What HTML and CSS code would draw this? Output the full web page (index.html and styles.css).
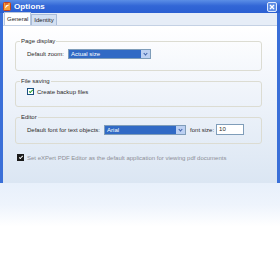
FILE: index.html
```html
<!DOCTYPE html>
<html lang="en">
<head>
    <meta charset="UTF-8">
    <title>Options</title>
    <link rel="stylesheet" href="styles.css">
</head>
<body>
    <div class="window">
        <div class="titlebar">
            <svg class="app-icon" width="8" height="9" viewBox="0 0 8 9">
                <rect x="0.5" y="0.5" width="7" height="8" rx="1" fill="#f6a03a" stroke="#c4431b"/>
                <path d="M2 6.5 C3 2 5 2 6 3.5 C4.5 3.5 3.5 5 2 6.5 Z" fill="#fff"/>
                <path d="M2 2 H5" stroke="#d2341c" stroke-width="1"/>
            </svg>
            <span class="title">Options</span>
            <span class="close">
                <svg width="8" height="8" viewBox="0 0 8 8"><path d="M2 2 L6 6 M6 2 L2 6" stroke="#fff" stroke-width="1.4"/></svg>
            </span>
        </div>
        <div class="frame">
            <div class="tabs">
                <span class="tab active">General</span>
                <span class="tab">Identity</span>
            </div>
            <div class="panel">
                <fieldset class="group">
                    <legend>Page display</legend>
                    <div class="row">
                        <span class="label">Default zoom:</span>
                        <span class="combo zoom-combo"><span class="value">Actual size</span><span class="drop"></span></span>
                    </div>
                </fieldset>
                <fieldset class="group">
                    <legend>File saving</legend>
                    <div class="row">
                        <span class="check green"></span>
                        <span class="label">Create backup files</span>
                    </div>
                </fieldset>
                <fieldset class="group">
                    <legend>Editor</legend>
                    <div class="row">
                        <span class="label">Default font for text objects:</span>
                        <span class="combo font-combo"><span class="value">Arial</span><span class="drop"></span></span>
                        <span class="label size-label">font size:</span>
                        <span class="textbox">10</span>
                    </div>
                </fieldset>
                <div class="default-app">
                    <span class="check dark"></span>
                    <span class="muted">Set eXPert PDF Editor as the default application for viewing pdf documents</span>
                </div>
            </div>
        </div>
    </div>
    <div class="reflection"></div>
</body>
</html>
```

FILE: styles.css
```css
body {
    margin: 0;
    width: 280px;
    height: 270px;
    overflow: hidden;
    background: #ffffff;
    font-family: "Liberation Sans", Arial, sans-serif;
    font-size: 6px;
    color: #2b2b2b;
}

.window {
    width: 280px;
    height: 183px;
    display: flex;
    flex-direction: column;
}

.titlebar {
    height: 13px;
    display: flex;
    align-items: center;
    padding: 0 3px;
    background: linear-gradient(#5b8ee6, #3266d6 45%, #2a5fd2);
    box-sizing: border-box;
}

.app-icon {
    display: block;
    margin-right: 3px;
}

.title {
    flex: 1;
    color: #ffffff;
    font-weight: bold;
    font-size: 8px;
    letter-spacing: 0.1px;
}

.close {
    width: 10px;
    height: 10px;
    box-sizing: border-box;
    border: 1px solid #dfe9fb;
    border-radius: 2px;
    background: #5f8ee6;
    display: flex;
    align-items: center;
    justify-content: center;
}

.frame {
    flex: 1;
    display: flex;
    flex-direction: column;
    border-left: 3px solid #3a6fd8;
    border-right: 3px solid #3a6fd8;
}

.tabs {
    height: 12px;
    display: flex;
    align-items: flex-end;
    padding-left: 1px;
    background: #e6edf7;
    border-bottom: 1px solid #c4d1e4;
}

.tab {
    height: 10px;
    line-height: 10px;
    padding: 0 2px;
    border: 1px solid #a9bcd8;
    border-bottom: none;
    background: #d3e0f2;
    color: #222;
}

.tab.active {
    height: 12px;
    line-height: 12px;
    padding: 0 2px;
    background: #ffffff;
    border-color: #b7c6dd;
}

.panel {
    flex: 1;
    padding: 11px 15px 0 12px;
    background: linear-gradient(#ffffff, #f4f7fc 30%, #dbe6f3);
}

.group {
    margin: 0 0 6px;
    padding: 3px 0 0 11px;
    border: 1px solid #dcdcd2;
    border-radius: 3px;
    min-width: 0;
}

.group legend {
    padding: 0 1px;
    margin-left: -7px;
    line-height: 8px;
}

.group:nth-of-type(1) {
    height: 29px;
}

.group:nth-of-type(2) {
    padding-top: 1px;
    height: 27px;
}

.group:nth-of-type(3) {
    height: 26px;
}

.row {
    display: flex;
    align-items: center;
    height: 11px;
}

.combo {
    display: flex;
    height: 10px;
    box-sizing: border-box;
    border: 1px solid #7f9db9;
    background: #316ac5;
    color: #ffffff;
    margin-left: 4px;
}

.combo .value {
    flex: 1;
    line-height: 8px;
    padding-left: 2px;
}

.combo .drop {
    width: 9px;
    background: #bcd0f2;
    position: relative;
}

.combo .drop::after {
    content: '';
    position: absolute;
    left: 3px;
    top: 2px;
    width: 2px;
    height: 2px;
    border-right: 1px solid #3b5fa8;
    border-bottom: 1px solid #3b5fa8;
    transform: rotate(45deg);
}

.zoom-combo {
    width: 83px;
}

.font-combo {
    width: 82px;
}

.size-label {
    margin-left: 4px;
}

.textbox {
    width: 28px;
    height: 11px;
    box-sizing: border-box;
    border: 1px solid #7f9db9;
    background: #ffffff;
    line-height: 9px;
    padding-left: 2px;
    margin-left: 2px;
}

.check {
    width: 7px;
    height: 7px;
    box-sizing: border-box;
    margin-right: 3px;
    position: relative;
}

.check::after {
    content: '';
    position: absolute;
    left: 2px;
    top: 0;
    width: 1px;
    height: 3px;
    border-right: 1px solid;
    border-bottom: 1px solid;
    transform: rotate(45deg);
}

.check.green {
    border: 1px solid #1c5180;
    background: #ffffff;
}

.check.green::after {
    border-color: #21a121;
}

.check.dark {
    background: #1a1a1a;
}

.check.dark::after {
    left: 2.5px;
    top: 1px;
    border-color: #ffffff;
}

.default-app {
    display: flex;
    align-items: center;
    margin: 10px 0 0 2px;
}

.muted {
    color: #8d8f96;
}

.reflection {
    height: 87px;
    background: linear-gradient(#e8f0fb, #eef4fc 25%, #ffffff 50%);
}
```
